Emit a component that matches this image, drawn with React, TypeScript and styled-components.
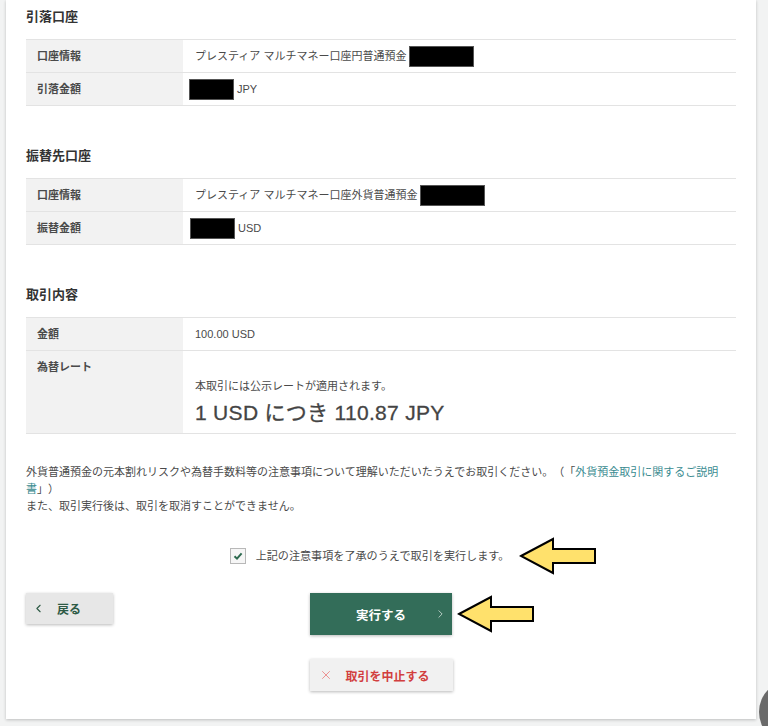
import React from 'react';
import styled, {createGlobalStyle} from 'styled-components';
import {ChevronLeft, ChevronRight, X} from 'lucide-react';

const GlobalStyle = createGlobalStyle`
  html, body {
    margin: 0;
    padding: 0;
    background: #f2f3f3;
  }
  body {
    font-family: "Liberation Sans", "Noto Sans CJK JP", sans-serif;
    font-size: 11px;
    color: #4a4a4a;
  }
`;

type DetailRow = {
  label: string;
  value: React.ReactNode;
};

const Redacted: React.FC<{width: number; shift?: number}> = ({width, shift = 0}) => (
  <RedactBox style={{width, marginLeft: shift}} />
);

const Section: React.FC<{title: string; rows: DetailRow[]}> = ({title, rows}) => (
  <SectionBlock>
    <Heading>{title}</Heading>
    <Table>
      {rows.map(row => (
        <Row key={row.label}>
          <Label>{row.label}</Label>
          <Value>{row.value}</Value>
        </Row>
      ))}
    </Table>
  </SectionBlock>
);

const Arrow: React.FC = () => (
  <svg width="78" height="38" viewBox="0 0 78 38">
    <polygon
      points="2,19 34,2 34,12 76,12 76,26 34,26 34,36"
      fill="#ffe16c"
      stroke="#000"
      strokeWidth="2"
    />
  </svg>
);

const CheckMark: React.FC = () => (
  <svg width="10" height="10" viewBox="0 0 10 10">
    <path d="M1.5 5.2 L4 7.6 L8.6 2.4" fill="none" stroke="#2d6a4f" strokeWidth="2" />
  </svg>
);

const App: React.FC = () => {
  return (
    <Page>
      <GlobalStyle />
      <Card>
        <Section
          title="引落口座"
          rows={[
            {
              label: '口座情報',
              value: (
                <>
                  プレスティア マルチマネー口座円普通預金&nbsp;
                  <Redacted width={65} />
                </>
              ),
            },
            {
              label: '引落金額',
              value: (
                <>
                  <Redacted width={45} shift={-6} />
                  <Unit>JPY</Unit>
                </>
              ),
            },
          ]}
        />
        <Section
          title="振替先口座"
          rows={[
            {
              label: '口座情報',
              value: (
                <>
                  プレスティア マルチマネー口座外貨普通預金&nbsp;
                  <Redacted width={65} />
                </>
              ),
            },
            {
              label: '振替金額',
              value: (
                <>
                  <Redacted width={45} shift={-5} />
                  <Unit>USD</Unit>
                </>
              ),
            },
          ]}
        />
        <Section
          title="取引内容"
          rows={[
            {label: '金額', value: '100.00 USD'},
            {
              label: '為替レート',
              value: (
                <RateBlock>
                  <RateNote>本取引には公示レートが適用されます。</RateNote>
                  <RateValue>1 USD につき 110.87 JPY</RateValue>
                </RateBlock>
              ),
            },
          ]}
        />

        <Notice>
          外貨普通預金の元本割れリスクや為替手数料等の注意事項について理解いただいたうえでお取引ください。（「
          <NoticeLink href="#">外貨預金取引に関するご説明書</NoticeLink>」）
          <br />
          また、取引実行後は、取引を取消すことができません。
        </Notice>

        <ConfirmRow>
          <ConfirmLabel>
            <CheckBox>
              <CheckMark />
            </CheckBox>
            <ConfirmText>
              上記の注意事項を了承のうえで取引を実行します。
              <ArrowSlot>
                <Arrow />
              </ArrowSlot>
            </ConfirmText>
          </ConfirmLabel>
        </ConfirmRow>

        <ActionGrid>
          <BackButton>
            <ChevronLeft size={13} strokeWidth={2} color="#2d5a45" />
            <span>戻る</span>
          </BackButton>
          <ExecuteButton>
            <span>実行する</span>
            <ExecuteChevron>
              <ChevronRight size={13} strokeWidth={1.6} color="#c9d9d2" />
            </ExecuteChevron>
            <ArrowSlot>
              <Arrow />
            </ArrowSlot>
          </ExecuteButton>
        </ActionGrid>

        <CancelRow>
          <CancelButton>
            <X size={14} strokeWidth={1.5} color="#ea8585" />
            <span>取引を中止する</span>
          </CancelButton>
        </CancelRow>
      </Card>
      <FloatingDot />
    </Page>
  );
};

const Page = styled.div`
  position: relative;
  width: 768px;
  height: 726px;
  overflow: hidden;
  background: #f2f3f3;
`;

const Card = styled.div`
  margin-left: 6px;
  width: 750px;
  height: 719px;
  box-sizing: border-box;
  padding: 7px 20px 28px;
  background: #fff;
  box-shadow: 0 1px 3px rgba(0, 0, 0, 0.22);
`;

const SectionBlock = styled.section`
  margin-bottom: 40px;
`;

const Heading = styled.h2`
  margin: 0 0 12px;
  font-size: 13px;
  line-height: 20px;
  font-weight: 700;
  color: #333;
`;

const Table = styled.div`
  border-top: 1px solid #e3e3e3;
`;

const Row = styled.div`
  display: grid;
  grid-template-columns: 157px 1fr;
  border-bottom: 1px solid #e3e3e3;
`;

const Label = styled.div`
  padding: 8px 11px;
  line-height: 16px;
  background: #f2f2f2;
  font-weight: 700;
  color: #4a4a4a;
`;

const Value = styled.div`
  display: flex;
  align-items: center;
  padding: 8px 12px;
  line-height: 16px;
  color: #4a4a4a;
`;

const RedactBox = styled.span`
  display: inline-block;
  height: 21px;
  margin-top: -3px;
  margin-bottom: -3px;
  background: #000;
  border: 1px solid #555;
  box-sizing: border-box;
`;

const Unit = styled.span`
  margin-left: 3px;
`;

const RateBlock = styled.div`
  display: flex;
  flex-direction: column;
`;

const RateNote = styled.div`
  margin-top: 19px;
  line-height: 16px;
`;

const RateValue = styled.div`
  margin-top: 7px;
  font-size: 21px;
  line-height: 24px;
  letter-spacing: 0.3px;
  color: #444;
  -webkit-text-stroke: 0.3px #444;
`;

const Notice = styled.p`
  margin: -10px 0 0;
  font-size: 11px;
  line-height: 17px;
  color: #4a4a4a;
  text-spacing-trim: space-all;
`;

const NoticeLink = styled.a`
  color: #3a8b90;
  text-decoration: none;
`;

const ConfirmRow = styled.div`
  display: flex;
  justify-content: center;
  margin-top: 33px;
  padding-right: 23px;
`;

const ConfirmLabel = styled.label`
  display: flex;
  align-items: center;
  gap: 10px;
`;

const CheckBox = styled.span`
  display: flex;
  align-items: center;
  justify-content: center;
  width: 16px;
  height: 16px;
  box-sizing: border-box;
  border: 1px solid #b8b8b8;
  background: #f6f6f6;
`;

const ConfirmText = styled.span`
  position: relative;
  font-size: 11.1px;
  line-height: 16px;
`;

const ArrowSlot = styled.span`
  position: absolute;
  left: calc(100% + 10px);
  top: 50%;
  transform: translateY(-50%);
  display: flex;
`;

const ActionGrid = styled.div`
  display: grid;
  grid-template-columns: 1fr 142px 1fr;
  align-items: start;
  margin-top: 29px;
`;

const BaseButton = styled.button`
  display: flex;
  align-items: center;
  border: none;
  font-family: inherit;
  font-weight: 700;
  font-size: 12px;
  cursor: pointer;
  box-shadow: 0 1px 3px rgba(0, 0, 0, 0.28);
`;

const BackButton = styled(BaseButton)`
  width: 87px;
  height: 31px;
  padding: 0 0 0 6px;
  gap: 12px;
  background: #e7e7e7;
  color: #2d5a45;
`;

const ExecuteButton = styled(BaseButton)`
  position: relative;
  justify-content: center;
  width: 142px;
  height: 42px;
  padding: 0;
  font-size: 12.5px;
  background: #336d59;
  color: #fff;

  & > ${ArrowSlot} {
    left: calc(100% + 5px);
  }
`;

const ExecuteChevron = styled.span`
  position: absolute;
  right: 5px;
  top: 50%;
  transform: translateY(-50%);
  display: flex;
`;

const CancelRow = styled.div`
  display: flex;
  justify-content: center;
  margin-top: 24px;
`;

const CancelButton = styled(BaseButton)`
  width: 143px;
  height: 32px;
  padding: 0 0 0 9px;
  gap: 13px;
  background: #f1f1f1;
  color: #d23f3f;
`;

const FloatingDot = styled.div`
  position: absolute;
  left: 759px;
  top: 680px;
  width: 64px;
  height: 64px;
  border-radius: 50%;
  background: #6a6a6a;
`;

export default App;
